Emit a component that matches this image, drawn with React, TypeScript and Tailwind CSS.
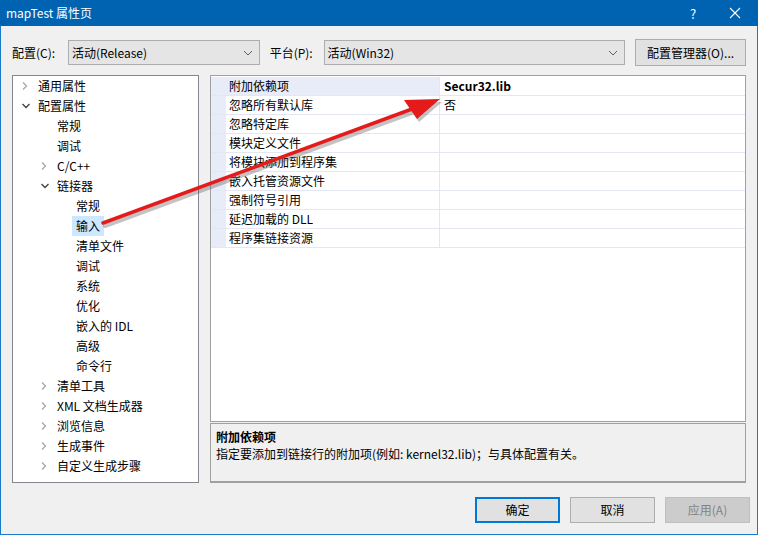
import React from "react";

const FONT = { fontFamily: '"Segoe UI", "Noto Sans CJK SC", "Noto Sans", sans-serif' };

type Node = { label: string; level: number; chev?: "open" | "closed"; selected?: boolean };

const tree: Node[] = [
  { label: "通用属性", level: 0, chev: "closed" },
  { label: "配置属性", level: 0, chev: "open" },
  { label: "常规", level: 1 },
  { label: "调试", level: 1 },
  { label: "C/C++", level: 1, chev: "closed" },
  { label: "链接器", level: 1, chev: "open" },
  { label: "常规", level: 2 },
  { label: "输入", level: 2, selected: true },
  { label: "清单文件", level: 2 },
  { label: "调试", level: 2 },
  { label: "系统", level: 2 },
  { label: "优化", level: 2 },
  { label: "嵌入的 IDL", level: 2 },
  { label: "高级", level: 2 },
  { label: "命令行", level: 2 },
  { label: "清单工具", level: 1, chev: "closed" },
  { label: "XML 文档生成器", level: 1, chev: "closed" },
  { label: "浏览信息", level: 1, chev: "closed" },
  { label: "生成事件", level: 1, chev: "closed" },
  { label: "自定义生成步骤", level: 1, chev: "closed" },
];

const props: [string, string, boolean?][] = [
  ["附加依赖项", "Secur32.lib", true],
  ["忽略所有默认库", "否"],
  ["忽略特定库", ""],
  ["模块定义文件", ""],
  ["将模块添加到程序集", ""],
  ["嵌入托管资源文件", ""],
  ["强制符号引用", ""],
  ["延迟加载的 DLL", ""],
  ["程序集链接资源", ""],
];

function Chevron({ kind }: { kind: "open" | "closed" }) {
  if (kind === "closed")
    return (
      <svg width="8" height="10" viewBox="0 0 8 10">
        <path d="M2 1.5 L5.5 5 L2 8.5" fill="none" stroke="#a6a6a6" strokeWidth="1.3" />
      </svg>
    );
  return (
    <svg width="10" height="8" viewBox="0 0 10 8">
      <path d="M1.5 2 L5 5.5 L8.5 2" fill="none" stroke="#404040" strokeWidth="1.3" />
    </svg>
  );
}

function Combo({ text, w }: { text: string; w: string }) {
  return (
    <div className={`${w} h-[25px] bg-[#e5e5e5] border border-[#adadad] flex items-center justify-between pl-[3px] pr-[6px]`}>
      <span>{text}</span>
      <svg width="10" height="6" viewBox="0 0 10 6">
        <path d="M1 1 L5 5 L9 1" fill="none" stroke="#606060" strokeWidth="1" />
      </svg>
    </div>
  );
}

export default function App() {
  return (
    <div
      className="relative w-[758px] h-[535px] bg-[#f0f0f0] border-x border-b border-[#1979ca] flex flex-col text-[12px] text-black leading-none"
      style={FONT}
    >
      {/* Title bar */}
      <div className="h-[26px] -mx-px bg-[#0063b1] flex items-center text-white">
        <span className="pl-[6px] text-[12px] flex-1">mapTest 属性页</span>
        <span className="w-[20px] text-center mr-[26px] text-[13px]">?</span>
        <svg width="12" height="12" viewBox="0 0 12 12" className="mr-[17px]">
          <path d="M1 1 L11 11 M11 1 L1 11" stroke="white" strokeWidth="1.1" />
        </svg>
      </div>

      {/* Config row */}
      <div className="mt-[13px] h-[27px] flex items-center pl-[11px] pr-[11px]">
        <span className="w-[56px]">配置(C):</span>
        <Combo text="活动(Release)" w="w-[192px]" />
        <span className="ml-[10px] w-[54px]">平台(P):</span>
        <Combo text="活动(Win32)" w="w-[302px]" />
        <div className="ml-[10px] w-[111px] h-[27px] bg-[#e1e1e1] border border-[#adadad] flex items-center justify-center">
          配置管理器(O)...
        </div>
      </div>

      {/* Main area */}
      <div className="mt-[9px] h-[408px] flex pl-[11px] pr-[11px]">
        {/* Tree */}
        <div className="w-[187px] h-full bg-white border border-[#828790] flex flex-col">
          {tree.map((n, i) => (
            <div key={i} className="h-[20px] flex items-center" style={{ paddingLeft: 7 + n.level * 19 }}>
              <div className="w-[18px] h-[20px] flex items-center justify-start pl-[1px]">
                {n.chev ? <Chevron kind={n.chev} /> : null}
              </div>
              <div className={`h-[20px] flex items-center px-[4px] -ml-[4px] ${n.selected ? "bg-[#cce8ff]" : ""}`}>
                {n.label}
              </div>
            </div>
          ))}
        </div>

        {/* Right side */}
        <div className="ml-[11px] w-[536px] h-full flex flex-col">
          <div className="h-[347px] bg-white border border-[#a0a0a0] pt-px">
            {props.map(([k, v, bold], i) => (
              <div key={i} className="h-[19px] flex border-b border-[#e3e6f3]">
                <div className="w-[15px] bg-[#e8ebf8]" />
                <div className={`w-[214px] flex items-center pl-[3px] border-r border-[#e3e6f3] ${i === 0 ? "bg-[#e8ebf8]" : ""}`}>
                  {k}
                </div>
                <div className={`flex-1 flex items-center pl-[4px] ${bold ? "font-bold" : ""}`}>{v}</div>
              </div>
            ))}
          </div>
          <div className="mt-[1px] flex-1 border border-[#a0a0a0] border-b-2 pl-[5px] pt-[7px] flex flex-col gap-[5px]">
            <div className="font-bold h-[12px]">附加依赖项</div>
            <div className="h-[12px]">指定要添加到链接行的附加项(例如: kernel32.lib)；与具体配置有关。</div>
          </div>
        </div>
      </div>

      {/* Buttons */}
      <div className="mt-[14px] flex justify-end pr-[7px] gap-[10px]">
        <div className="w-[85px] h-[26px] bg-[#e1e1e1] border-2 border-[#0078d7] flex items-center justify-center">确定</div>
        <div className="w-[85px] h-[26px] bg-[#e1e1e1] border border-[#adadad] flex items-center justify-center">取消</div>
        <div className="w-[85px] h-[26px] bg-[#cccccc] border border-[#bfbfbf] flex items-center justify-center text-[#838383]">
          应用(A)
        </div>
      </div>

      {/* Red arrow overlay */}
      <svg className="absolute left-[-1px] top-0 pointer-events-none" width="758" height="535" viewBox="0 0 758 535">
        <g opacity="0.35" transform="translate(2,3)">
          <line x1="103" y1="223" x2="412" y2="109" stroke="#555" strokeWidth="4" strokeLinecap="round" />
          <polygon points="440,99 404,100 417,119" fill="#555" />
        </g>
        <line x1="103" y1="223" x2="412" y2="109" stroke="#e51b1b" strokeWidth="3.5" strokeLinecap="round" />
        <polygon points="440,99 404,100 417,119" fill="#e51b1b" />
      </svg>
    </div>
  );
}
